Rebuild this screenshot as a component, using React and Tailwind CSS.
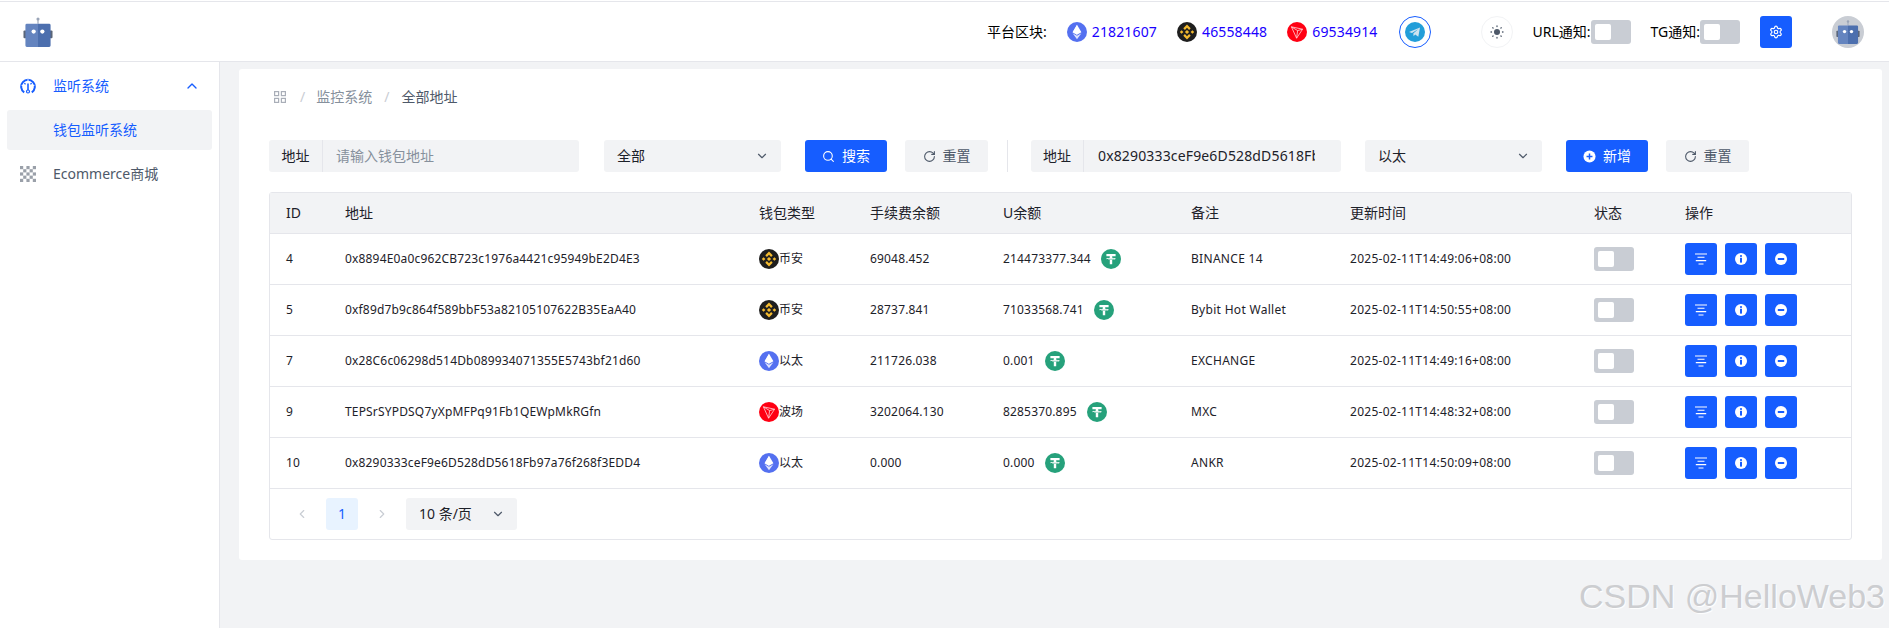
import { ChevronDown, ChevronLeft, ChevronRight, ChevronUp, RotateCw, Search, Settings } from "lucide-react";

const rows = [
  { id: 4, addr: "0x8894E0a0c962CB723c1976a4421c95949bE2D4E3", type: "bnb", fee: "69048.452", u: "214473377.344", note: "BINANCE 14", time: "2025-02-11T14:49:06+08:00" },
  { id: 5, addr: "0xf89d7b9c864f589bbF53a82105107622B35EaA40", type: "bnb", fee: "28737.841", u: "71033568.741", note: "Bybit Hot Wallet", time: "2025-02-11T14:50:55+08:00" },
  { id: 7, addr: "0x28C6c06298d514Db089934071355E5743bf21d60", type: "eth", fee: "211726.038", u: "0.001", note: "EXCHANGE", time: "2025-02-11T14:49:16+08:00" },
  { id: 9, addr: "TEPSrSYPDSQ7yXpMFPq91Fb1QEWpMkRGfn", type: "tron", fee: "3202064.130", u: "8285370.895", note: "MXC", time: "2025-02-11T14:48:32+08:00" },
  { id: 10, addr: "0x8290333ceF9e6D528dD5618Fb97a76f268f3EDD4", type: "eth", fee: "0.000", u: "0.000", note: "ANKR", time: "2025-02-11T14:50:09+08:00" },
];

const walletName = { bnb: "币安", eth: "以太", tron: "波场" };

function EthIcon() {
  return (
    <svg width="20" height="20" viewBox="0 0 20 20" className="shrink-0">
      <circle cx="10" cy="10" r="10" fill="#5470f0" />
      <path d="M10 2.800 5.600 10.200 10 12.800l4.400-2.600z" fill="#fff" />
      <path d="M10 2.800v10L5.600 10.200z" fill="#fff" opacity=".8" />
      <path d="M5.600 11.200 10 17.200l4.400-6-4.400 2.600z" fill="#dfe4fd" />
    </svg>
  );
}

function BnbIcon() {
  return (
    <svg width="20" height="20" viewBox="0 0 20 20" className="shrink-0">
      <circle cx="10" cy="10" r="10" fill="#1e1e1e" />
      <g fill="#f3ba2f">
        <path d="M10 2.600 13.700 6.300 12.100 7.900 10 5.800 7.900 7.900 6.300 6.300z" />
        <path d="M10 17.400 6.300 13.700 7.900 12.100 10 14.200 12.100 12.100 13.700 13.700z" />
        <path d="M2.800 10 4.600 8.200 6.400 10 4.600 11.800z" />
        <path d="M13.600 10 15.400 8.200 17.200 10 15.400 11.800z" />
        <path d="M10 7.900 12.100 10 10 12.100 7.900 10z" />
      </g>
    </svg>
  );
}

function TronIcon() {
  return (
    <svg width="20" height="20" viewBox="0 0 20 20" className="shrink-0">
      <circle cx="10" cy="10" r="10" fill="#ff0013" />
      <path d="M4.400 4.800 15.600 7.200 9.600 16.200zM4.400 4.800 10.600 8.600 9.600 16.200M10.600 8.600 15.600 7.200" fill="none" stroke="#ffd5d8" strokeWidth=".8" strokeLinejoin="round" />
    </svg>
  );
}

function UsdtIcon() {
  return (
    <svg width="20" height="20" viewBox="0 0 20 20" className="shrink-0">
      <circle cx="10" cy="10" r="10" fill="#26a17b" />
      <path d="M5.400 5h9.200v2.200h-3.400v1.600c2 .1 3.600.5 3.600 1s-1.600.9-3.600 1v4.400H8.800v-4.400c-2-.1-3.600-.5-3.600-1s1.600-.9 3.600-1V7.200H5.400z" fill="#fff" />
      <path d="M6.600 9.800c.7.3 1.900.5 3.400.5s2.700-.2 3.400-.5" fill="none" stroke="#26a17b" strokeWidth=".5" />
    </svg>
  );
}

function Robot({ size = 30 }) {
  return (
    <svg width={size} height={size} viewBox="0 0 30 31">
      <circle cx="15" cy="2" r="1.600" fill="#9aa5b8" />
      <rect x="14.400" y="2" width="1.200" height="5" fill="#9aa5b8" />
      <rect x="0" y="14" width="3" height="8" rx="1" fill="#5a6578" />
      <rect x="27" y="14" width="3" height="8" rx="1" fill="#5a6578" />
      <path d="M3.500 7h11.500v24H3.500A1.500 1.500 0 0 1 2 29.500v-21A1.500 1.500 0 0 1 3.500 7z" fill="#6484bf" />
      <path d="M15 7h11.500A1.500 1.500 0 0 1 28 8.500v21a1.500 1.500 0 0 1-1.500 1.500H15z" fill="#4c6fae" />
      <circle cx="10.500" cy="15" r="2.200" fill="#fff" />
      <circle cx="19.500" cy="15" r="2.200" fill="#fff" />
    </svg>
  );
}

function Toggle() {
  return (
    <div className="flex h-6 w-10 shrink-0 items-center rounded-[3px] bg-[#c9cdd4] pl-1">
      <div className="h-4 w-4 rounded-[2px] bg-white" />
    </div>
  );
}

function AddonInput({ placeholder, value, width, labelWidth, padding }) {
  return (
    <div className={`flex h-8 overflow-hidden rounded-[3px] bg-[#f2f3f5] text-sm ${width}`}>
      <div className={`flex items-center justify-center border-r border-[#e5e6eb] text-[#1d2129] ${labelWidth}`}>地址</div>
      <input
        readOnly
        placeholder={placeholder}
        value={value}
        className={`min-w-0 flex-1 bg-transparent text-[#1d2129] outline-none placeholder:text-[#86909c] ${padding}`}
      />
    </div>
  );
}

function SelectBox({ label, width, className = "" }) {
  return (
    <div className={`flex h-8 items-center justify-between rounded-[3px] bg-[#f2f3f5] pl-[13px] pr-3 text-sm text-[#1d2129] ${width} ${className}`}>
      <span>{label}</span>
      <ChevronDown size={14} className="text-[#4e5969]" />
    </div>
  );
}

function ResetButton({ className = "" }) {
  return (
    <button className={`flex h-8 w-[83px] items-center justify-center gap-[7px] rounded-[3px] bg-[#f2f3f5] text-sm text-[#4e5969] ${className}`}>
      <RotateCw size={13} />
      重置
    </button>
  );
}

function ListIcon() {
  return (
    <svg width="14" height="14" viewBox="0 0 14 14" stroke="#fff" strokeWidth="1.100">
      <path d="M1 2h12M3.500 5.300h7M1.800 8.600h10.400M4.500 12h5" />
    </svg>
  );
}

function InfoIcon() {
  return (
    <svg width="14" height="14" viewBox="0 0 14 14">
      <circle cx="7" cy="7" r="6" fill="#fff" />
      <rect x="6" y="5.800" width="2" height="4.800" fill="#165dff" />
      <rect x="6" y="3.200" width="2" height="1.600" fill="#165dff" />
    </svg>
  );
}

function MinusIcon() {
  return (
    <svg width="14" height="14" viewBox="0 0 14 14">
      <circle cx="7" cy="7" r="6" fill="#fff" />
      <rect x="3.800" y="6" width="6.400" height="2" fill="#165dff" />
    </svg>
  );
}

function ActionButton({ children }) {
  return <button className="flex h-8 w-8 items-center justify-center rounded-[3px] bg-[#165dff]">{children}</button>;
}

function Header() {
  return (
    <header className="flex h-[61px] shrink-0 items-center border-y border-[#e5e6eb] bg-white text-sm">
      <div className="ml-[23px]">
        <Robot />
      </div>
      <div className="ml-auto flex items-center pr-[25px]">
        <span className="text-black">平台区块:</span>
        <div className="ml-5 flex items-center gap-[5px] tracking-[.15px] text-[#1a00ff]"><EthIcon />21821607</div>
        <div className="ml-5 flex items-center gap-[5px] tracking-[.15px] text-[#1a00ff]"><BnbIcon />46558448</div>
        <div className="ml-5 flex items-center gap-[5px] tracking-[.15px] text-[#1a00ff]"><TronIcon />69534914</div>
        <div className="ml-[21px] flex h-8 w-8 items-center justify-center rounded-full border border-[#165dff]">
          <svg width="20" height="20" viewBox="0 0 20 20">
            <circle cx="10" cy="10" r="10" fill="#229ed9" />
            <path d="M4 10 15 5.500 13.300 14.800 10.200 12.600 8.600 14.200 8.300 11.500 13 7.300 7 10.900z" fill="#cfe3ef" />
          </svg>
        </div>
        <div className="ml-[50px] flex h-8 w-8 items-center justify-center rounded-full border border-[#f2f3f5]">
          <svg width="14" height="14" viewBox="0 0 14 14" fill="#4e5969">
            <circle cx="7" cy="7" r="3" />
            <g stroke="#4e5969" strokeWidth="1.300" strokeLinecap="round">
              <path d="M7 1v.5M7 12.500v.5M1 7h.5M12.500 7h.5M2.800 2.800l.3.3M10.900 10.900l.3.3M2.800 11.200l.3-.3M10.900 3.100l.3-.3" />
            </g>
          </svg>
        </div>
        <span className="ml-5 text-black">URL通知:</span>
        <Toggle />
        <span className="ml-5 text-black">TG通知:</span>
        <Toggle />
        <button className="ml-5 flex h-8 w-8 items-center justify-center rounded-[3px] bg-[#165dff]">
          <Settings size={14} className="text-white" />
        </button>
        <div className="ml-10 flex h-8 w-8 items-center justify-center rounded-full bg-[#c9cdd4]">
          <Robot size={24} />
        </div>
      </div>
    </header>
  );
}

function Sidebar() {
  return (
    <aside className="flex w-[220px] shrink-0 flex-col gap-1 border-r border-[#e5e6eb] bg-white px-[7px] pt-1 text-sm">
      <div className="flex h-10 items-center pl-[13px] pr-3 text-[#165dff]">
        <svg width="16" height="16" viewBox="0 0 16 16" fill="none" stroke="#165dff">
          <path d="M4.200 14.300A6.800 6.800 0 1 1 11.800 14.300" strokeWidth="2" />
          <path d="M8 1.200v2.400M1.600 7.400h2.200M12.200 7.400h2.200" stroke="#fff" strokeWidth="1" />
          <path d="M8 5.500v6.500" strokeWidth="1.600" />
          <path d="M4.300 5.200 5.600 6.300M11.700 5.200 10.400 6.300" strokeWidth="1.200" />
          <circle cx="8" cy="13.500" r="1.500" strokeWidth="1.200" />
        </svg>
        <span className="ml-[17px]">监听系统</span>
        <ChevronUp size={16} className="ml-auto" />
      </div>
      <div className="flex h-10 items-center rounded-[3px] bg-[#f2f3f5] pl-[46px] text-[#165dff]">钱包监听系统</div>
      <div className="flex h-10 items-center pl-[13px] text-[#4e5969]">
        <svg width="16" height="16" viewBox="0 0 16 16" fill="#9aa0a9">
          {Array.from({ length: 25 }).map((_, i) =>
            i % 2 === 0 ? <rect key={i} x={(i % 5) * 3.2} y={Math.floor(i / 5) * 3.2} width="3.200" height="3.200" /> : null
          )}
        </svg>
        <span className="ml-[17px]">Ecommerce商城</span>
      </div>
    </aside>
  );
}

function Filters() {
  return (
    <div className="mt-8 flex items-center">
      <AddonInput placeholder="请输入钱包地址" width="w-[310px]" labelWidth="w-[54px]" padding="pl-[13px]" />
      <SelectBox label="全部" width="w-[177px]" className="ml-[25px]" />
      <button className="ml-6 flex h-8 w-[82px] items-center justify-center gap-[7px] rounded-[3px] bg-[#165dff] text-sm text-white">
        <Search size={13} />
        搜索
      </button>
      <ResetButton className="ml-[18px]" />
      <div className="ml-[19px] h-8 w-px bg-[#e5e6eb]" />
      <div className="ml-[23px]">
        <AddonInput value="0x8290333ceF9e6D528dD5618Fb97a76f268f3EDD4" width="w-[310px]" labelWidth="w-[53px]" padding="pl-[14px] pr-[26px] tracking-[.15px]" />
      </div>
      <SelectBox label="以太" width="w-[177px]" className="ml-6" />
      <button className="ml-6 flex h-8 w-[82px] items-center justify-center gap-[7px] rounded-[3px] bg-[#165dff] text-sm text-white">
        <svg width="13" height="13" viewBox="0 0 14 14">
          <circle cx="7" cy="7" r="6.500" fill="#fff" />
          <path d="M7 3.800v6.400M3.800 7h6.400" stroke="#165dff" strokeWidth="1.600" />
        </svg>
        新增
      </button>
      <ResetButton className="ml-[18px]" />
    </div>
  );
}

function AddressTable() {
  const heads = ["ID", "地址", "钱包类型", "手续费余额", "U余额", "备注", "更新时间", "状态", "操作"];
  const widths = ["w-[75px]", "w-[414px]", "w-[111px]", "w-[133px]", "w-[188px]", "w-[159px]", "w-[244px]", "w-[91px]", "w-[166px]"];

  return (
    <div className="mt-5 rounded-[3px] border border-[#e5e6eb]">
      <table className="w-full table-fixed border-separate border-spacing-0 text-xs tracking-[.17px] text-[#1d2129] [&_td]:border-b [&_td]:border-[#e5e6eb] [&_th]:border-b [&_th]:border-[#e5e6eb]">
        <colgroup>
          {widths.map((w, i) => (
            <col key={i} className={w} />
          ))}
        </colgroup>
        <thead>
          <tr className="h-[41px] bg-[#f2f3f5] text-left text-sm tracking-normal">
            {heads.map((h, i) => (
              <th key={h} className={`font-normal ${i === 0 ? "pl-4" : ""}`}>{h}</th>
            ))}
          </tr>
        </thead>
        <tbody>
          {rows.map((r) => (
            <tr key={r.id} className="h-[51px]">
              <td className="pl-4">{r.id}</td>
              <td>{r.addr}</td>
              <td>
                <div className="flex items-center tracking-normal">
                  {r.type === "bnb" && <BnbIcon />}
                  {r.type === "eth" && <EthIcon />}
                  {r.type === "tron" && <TronIcon />}
                  {walletName[r.type]}
                </div>
              </td>
              <td>{r.fee}</td>
              <td>
                <div className="flex items-center gap-[10px]">
                  {r.u}
                  <UsdtIcon />
                </div>
              </td>
              <td className="tracking-[.3px]">{r.note}</td>
              <td className="tracking-[.27px]">{r.time}</td>
              <td><Toggle /></td>
              <td>
                <div className="flex gap-2">
                  <ActionButton><ListIcon /></ActionButton>
                  <ActionButton><InfoIcon /></ActionButton>
                  <ActionButton><MinusIcon /></ActionButton>
                </div>
              </td>
            </tr>
          ))}
        </tbody>
      </table>
      <div className="flex h-[50px] items-center pl-[25px] text-sm">
        <ChevronLeft size={14} className="text-[#c9cdd4]" />
        <div className="ml-[17px] flex h-8 w-8 items-center justify-center rounded-[3px] bg-[#e8f3ff] text-[#165dff]">1</div>
        <ChevronRight size={14} className="ml-[17px] text-[#c9cdd4]" />
        <div className="ml-[17px] flex h-8 w-[111px] items-center justify-between rounded-[3px] bg-[#f2f3f5] pl-[13px] pr-3 text-[#1d2129]">
          <span>10 条/页</span>
          <ChevronDown size={14} className="text-[#4e5969]" />
        </div>
      </div>
    </div>
  );
}

export default function App() {
  return (
    <div className="relative flex h-screen flex-col overflow-hidden bg-white pt-px font-['Noto_Sans','Noto_Sans_CJK_SC',sans-serif]">
      <Header />
      <div className="flex flex-1 overflow-hidden">
        <Sidebar />
        <main className="flex-1 bg-[#f2f3f5] pl-[19px] pr-[7px] pt-[7px]">
          <div className="rounded-[3px] bg-white px-[30px] pb-5 pt-[17px]">
            <div className="flex h-[22px] items-center pl-[5px] text-sm text-[#86909c]">
              <svg width="12" height="12" viewBox="0 0 12 12" fill="none" stroke="#a9aeb8" strokeWidth="1.200">
                <rect x=".6" y=".6" width="4" height="4" />
                <rect x="7.400" y=".6" width="4" height="4" />
                <rect x=".6" y="7.400" width="4" height="4" />
                <rect x="7.400" y="7.400" width="4" height="4" />
              </svg>
              <span className="ml-[14px] text-[#c9cdd4]">/</span>
              <span className="ml-[11px]">监控系统</span>
              <span className="ml-[12px] text-[#c9cdd4]">/</span>
              <span className="ml-[12px] text-[#4e5969]">全部地址</span>
            </div>
            <Filters />
            <AddressTable />
          </div>
        </main>
      </div>
      <div className="pointer-events-none absolute bottom-[15px] right-[4px] font-['Liberation_Sans',sans-serif] text-[34px] leading-none text-[#cccdd0] [text-shadow:1px_1px_1px_#fff]">
        CSDN @HelloWeb3
      </div>
    </div>
  );
}
